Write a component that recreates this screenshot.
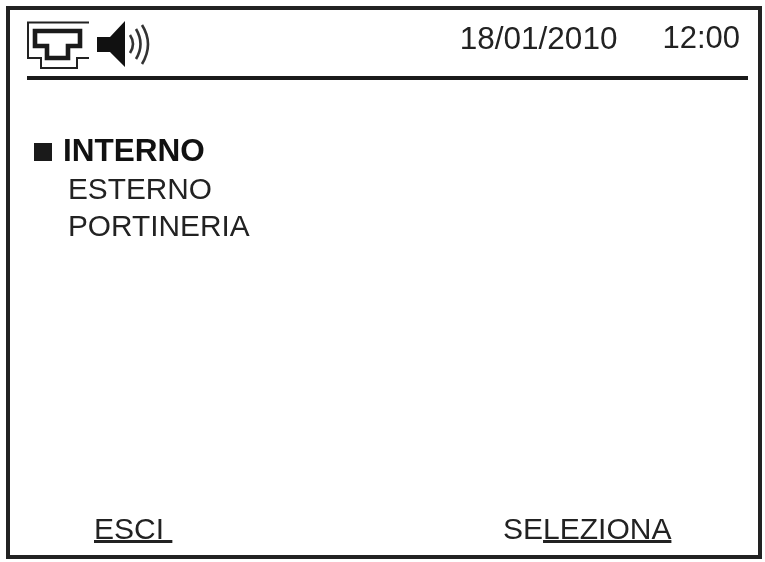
<div class="screen">
  <header class="top">
    <svg class="icons" width="128" height="50" viewBox="0 0 128 50" aria-hidden="true">
      <path d="M62 3.5H1V39H14V49H50V39H62" fill="none" stroke="#222" stroke-width="2"/>
      <path d="M8 12H53V27H41V39H20V27H8Z" fill="none" stroke="#1a1a1a" stroke-width="4.6"/>
      <path d="M70 18H83L98 2V48L83 33H70Z" fill="#111"/>
      <path d="M103 16Q109 25 103 34M109 10Q118 25 109 40M115 6Q127 25 115 45" fill="none" stroke="#333" stroke-width="2.6"/>
    </svg>
    <span class="date">18/01/2010</span>
    <span class="time">12:00</span>
  </header>
  <main class="menu">
    <div class="row selected"><span class="bullet"></span>INTERNO</div>
    <div class="row">ESTERNO</div>
    <div class="row">PORTINERIA</div>
  </main>
  <footer class="bottom">
    <span class="esci"><u>ESCI&nbsp;</u></span>
    <span class="sel">SE<u>LEZIONA</u></span>
  </footer>
</div>

<style>
  :global(body) {
    margin: 0;
    background: #fff;
  }
  .screen {
    box-sizing: border-box;
    width: 756px;
    height: 553px;
    margin: 6px 0 0 6px;
    border: 4px solid #222;
    display: flex;
    flex-direction: column;
    font-family: "Liberation Sans", Arial, sans-serif;
    color: #222;
    font-size: 30px;
    filter: blur(0.5px);
  }
  .top {
    display: flex;
    align-items: center;
    height: 60px;
    margin: 4px 10px 0 17px;
    padding-right: 8px;
    padding-bottom: 2px;
    border-bottom: 4px solid #1a1a1a;
  }
  .icons {
    margin-right: auto;
  }
  .date,
  .time {
    font-size: 31.5px;
    margin-bottom: 12px;
  }
  .date {
    margin-right: 45px;
  }
  .time {
    font-size: 31px;
  }
  .menu {
    display: flex;
    flex-direction: column;
    margin: 52px 0 0 24px;
    flex: 1;
  }
  .row {
    line-height: 37.5px;
    padding-left: 34px;
    font-size: 29.8px;
  }
  .selected {
    position: relative;
    padding-left: 29px;
    font-weight: bold;
    font-size: 31.5px;
    color: #111;
  }
  .bullet {
    position: absolute;
    left: 0;
    top: 11px;
    width: 18px;
    height: 18px;
    background: #1a1a1a;
  }
  .bottom {
    display: flex;
    box-sizing: border-box;
    height: 52px;
    padding: 9px 0 0 84px;
  }
  .esci {
    width: 409px;
  }
  u {
    text-underline-offset: 1px;
  }
</style>
